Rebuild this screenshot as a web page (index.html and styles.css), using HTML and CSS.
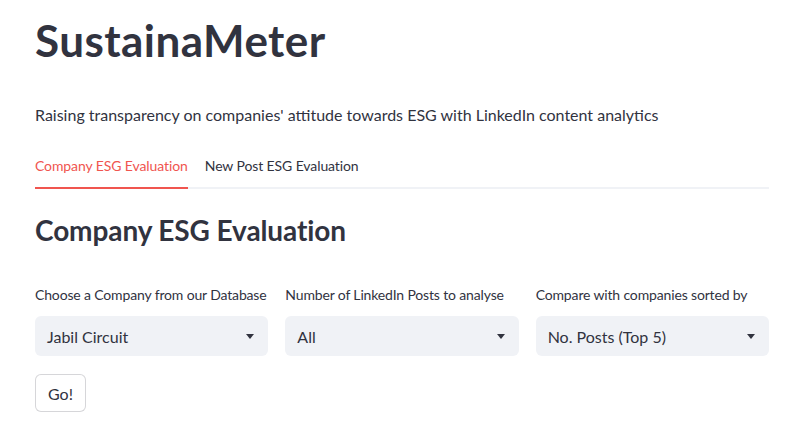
FILE: index.html
```html
<!DOCTYPE html>
<html lang="en">
<head>
<meta charset="utf-8">
<title>SustainaMeter</title>
<link rel="stylesheet" href="styles.css">
</head>
<body>
<main class="page">
  <h1 class="title">SustainaMeter</h1>
  <p class="subtitle">Raising transparency on companies' attitude towards ESG with LinkedIn content analytics</p>
  <div class="tabs">
    <div class="tab active">Company ESG Evaluation</div>
    <div class="tab">New Post ESG Evaluation</div>
  </div>
  <h2 class="section">Company ESG Evaluation</h2>
  <div class="columns">
    <div class="field">
      <div class="label">Choose a Company from our Database</div>
      <div class="select"><span>Jabil Circuit</span><svg class="caret" width="8" height="5" viewBox="0 0 8 5"><polygon points="0,0 8,0 4,5" fill="#31333F"/></svg></div>
    </div>
    <div class="field">
      <div class="label">Number of LinkedIn Posts to analyse</div>
      <div class="select"><span>All</span><svg class="caret" width="8" height="5" viewBox="0 0 8 5"><polygon points="0,0 8,0 4,5" fill="#31333F"/></svg></div>
    </div>
    <div class="field">
      <div class="label">Compare with companies sorted by</div>
      <div class="select"><span>No. Posts (Top 5)</span><svg class="caret" width="8" height="5" viewBox="0 0 8 5"><polygon points="0,0 8,0 4,5" fill="#31333F"/></svg></div>
    </div>
  </div>
  <button class="go">Go!</button>
</main>
</body>
</html>
```
FILE: styles.css
```css
html, body {
  margin: 0;
  padding: 0;
  background: #ffffff;
}
body {
  font-family: "Lato", "Noto Sans", sans-serif;
  color: #31333F;
}
.page {
  width: 734px;
  padding: 14px 37px 0 35px;
}
.title {
  margin: 0;
  font-size: 44px;
  line-height: 52.8px;
  font-weight: 700;
  letter-spacing: 0.45px;
}
.subtitle {
  margin: 36px 0 0;
  font-size: 16px;
  line-height: 24px;
}
.tabs {
  margin-top: 29px;
  display: flex;
  gap: 17px;
  border-bottom: 2px solid #f0f2f6;
}
.tab {
  font-size: 14px;
  line-height: 20px;
  padding-bottom: 11px;
  margin-bottom: -2px;
  border-bottom: 2px solid transparent;
  letter-spacing: -0.1px;
}
.tab.active {
  color: #f0554f;
  border-bottom-color: #f0554f;
}
.section {
  margin: 25px 0 0;
  font-size: 28px;
  line-height: 33.6px;
  font-weight: 700;
  letter-spacing: -0.1px;
}
.columns {
  margin-top: 38px;
  display: grid;
  grid-template-columns: repeat(3, 1fr);
  gap: 17px;
}
.label {
  font-size: 14px;
  line-height: 20px;
  margin-bottom: 11px;
  white-space: nowrap;
  letter-spacing: -0.15px;
}
.select {
  height: 40px;
  box-sizing: border-box;
  background: #f0f2f6;
  border-radius: 6px;
  display: flex;
  align-items: center;
  justify-content: space-between;
  padding: 0 14px 0 12px;
  font-size: 16px;
}
.caret {
  display: block;
}
.go {
  margin-top: 18px;
  height: 38px;
  padding: 0 12px;
  background: #ffffff;
  border: 1px solid rgba(49, 51, 63, 0.2);
  border-radius: 6px;
  font-family: inherit;
  font-size: 16px;
  color: #31333F;
}
```
